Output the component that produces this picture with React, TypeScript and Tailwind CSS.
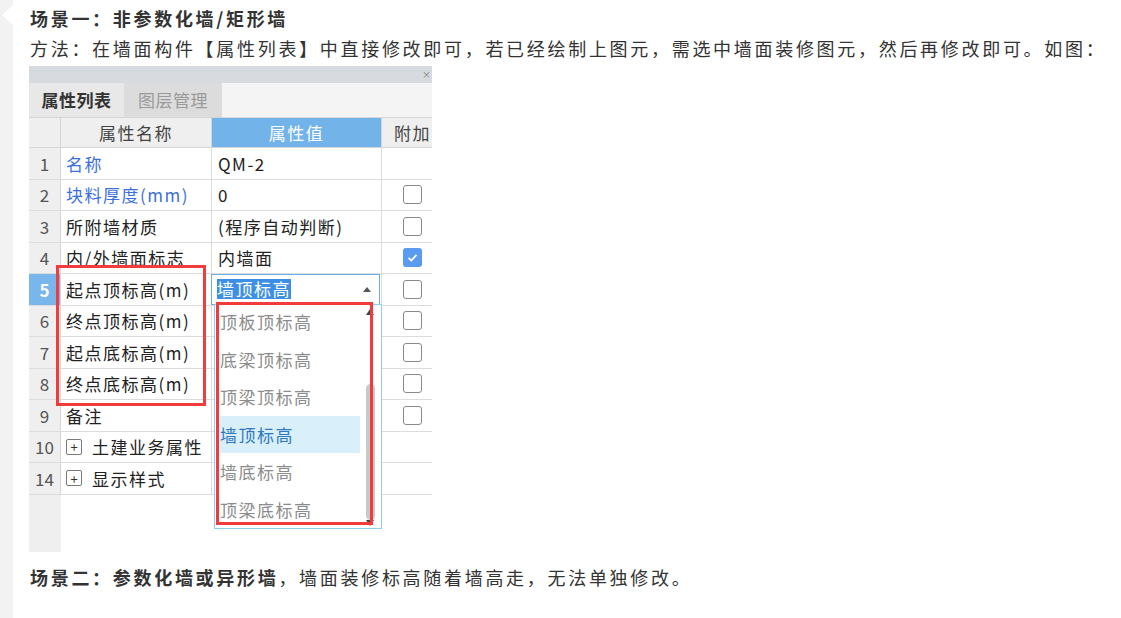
const FONT = { fontFamily: "'Noto Sans CJK SC', 'Noto Sans', sans-serif" };

type Row = {
  n: string;
  name: string;
  blue?: boolean;
  value?: string;
  cb?: boolean | null;
  combo?: boolean;
  plus?: boolean;
};

const rows: Row[] = [
  { n: "1", name: "名称", blue: true, value: "QM-2", cb: null },
  { n: "2", name: "块料厚度(mm)", blue: true, value: "0", cb: false },
  { n: "3", name: "所附墙材质", value: "(程序自动判断)", cb: false },
  { n: "4", name: "内/外墙面标志", value: "内墙面", cb: true },
  { n: "5", name: "起点顶标高(m)", combo: true, cb: false },
  { n: "6", name: "终点顶标高(m)", cb: false },
  { n: "7", name: "起点底标高(m)", cb: false },
  { n: "8", name: "终点底标高(m)", cb: false },
  { n: "9", name: "备注", cb: false },
  { n: "10", name: "土建业务属性", plus: true, cb: null },
  { n: "14", name: "显示样式", plus: true, cb: null },
];

const options = ["顶板顶标高", "底梁顶标高", "顶梁顶标高", "墙顶标高", "墙底标高", "顶梁底标高"];

function Checkbox({ checked }: { checked: boolean }) {
  if (checked) {
    return (
      <div className="w-[19px] h-[19px] rounded-[3px] bg-[#5b9bef] flex items-center justify-center">
        <svg width="13" height="13" viewBox="0 0 13 13">
          <path d="M2.5 6.8 L5.3 9.5 L10.5 3.8" fill="none" stroke="#fff" strokeWidth="1.8" />
        </svg>
      </div>
    );
  }
  return <div className="w-[19px] h-[19px] rounded-[3px] border border-[#8a8a8a] bg-white" />;
}

function PropertyTable() {
  return (
    <div className="relative w-[403px] h-[486px] -ml-px bg-white overflow-hidden">
      <div className="h-[17px] bg-[#d7dade] flex justify-end items-center pr-[1px] text-[9px] text-[#777] leading-none">×</div>
      <div className="h-[34px] bg-[#f4f4f4] flex text-[17px] tracking-[0.5px]">
        <div className="w-[95px] bg-[#e8e8e8] flex items-center justify-center font-bold text-[#333]">属性列表</div>
        <div className="w-[98px] bg-[#dcdcdc] flex items-center justify-center text-[#9a9a9a]">图层管理</div>
      </div>

      <div className="flex h-[31px] border-t border-b border-[#d6d6d6] text-[17px] tracking-[1.5px]">
        <div className="w-[32px] bg-[#efefef] border-r border-[#d6d6d6]" />
        <div className="w-[151px] bg-[#efefef] border-r border-[#d6d6d6] flex items-center justify-center text-[#444]">属性名称</div>
        <div className="w-[170px] bg-[#72b3e9] border-r border-[#d6d6d6] flex items-center justify-center text-white">属性值</div>
        <div className="flex-1 bg-[#efefef] flex items-center pl-[12px] text-[#444]">附加</div>
      </div>

      {rows.map((r) => (
        <div key={r.n} className="flex h-[31.5px] border-b border-[#dcdcdc] text-[17px] tracking-[1.5px]">
          <div
            className={
              r.combo
                ? "w-[32px] bg-[#79b6ec] border-r border-[#d6d6d6] flex items-center justify-center text-white font-bold tracking-normal"
                : "w-[32px] bg-[#efefef] border-r border-[#d6d6d6] flex items-center justify-center text-[#555] tracking-normal"
            }
          >
            {r.n}
          </div>
          <div
            className={
              r.blue
                ? "w-[151px] border-r border-[#dcdcdc] flex items-center pl-[5px] text-[#3c6fdc] whitespace-nowrap"
                : "w-[151px] border-r border-[#dcdcdc] flex items-center pl-[5px] text-[#222] whitespace-nowrap"
            }
          >
            {r.plus && (
              <span className="w-[16px] h-[16px] mr-[10px] rounded-[2px] border border-[#7a7a7a] flex items-center justify-center text-[13px] leading-none tracking-normal text-[#333]">
                +
              </span>
            )}
            {r.name}
          </div>
          <div className="w-[170px] border-r border-[#dcdcdc] flex items-center text-[#222] whitespace-nowrap">
            {r.combo ? (
              <div className="w-[169px] h-[31px] -ml-px border border-[#6aaee6] flex items-center pl-[5px] pr-[8px] bg-white">
                <span className="bg-[#3d8fe6] text-white leading-[20px]">墙顶标高</span>
                <svg className="ml-auto" width="8" height="5" viewBox="0 0 8 5">
                  <path d="M0 5 L4 0 L8 5 Z" fill="#555" />
                </svg>
              </div>
            ) : (
              <span className="pl-[6px]">{r.value}</span>
            )}
          </div>
          <div className="flex-1 flex items-center pl-[21px]">
            {r.cb !== null && r.cb !== undefined && <Checkbox checked={r.cb} />}
          </div>
        </div>
      ))}

      <div className="flex h-[60px]">
        <div className="w-[32px] bg-[#efefef]" />
      </div>

      <div className="absolute left-[185px] top-[238px] w-[168px] h-[225px] border border-[#8ccfee] bg-white text-[17px] tracking-[1.5px] overflow-hidden">
        <div className="-mt-[2px]">
          {options.map((o, i) => (
            <div
              key={o}
              className={
                i === 3
                  ? "h-[37.5px] ml-[5px] w-[140px] flex items-center bg-[#d9f0fb] text-[#2f78c0]"
                  : "h-[37.5px] ml-[5px] w-[140px] flex items-center text-[#8c8c8c]"
              }
            >
              {o}
            </div>
          ))}
        </div>
        <div className="absolute right-[6px] top-[2px] bottom-[2px] w-[10px] flex flex-col items-center">
          <svg width="8" height="6" viewBox="0 0 8 6" className="mt-[2px]">
            <path d="M0 6 L4 0 L8 6 Z" fill="#444" />
          </svg>
          <div className="mt-[69px] w-[9px] flex-1 rounded-full bg-[#c9c9c9]" />
          <svg width="8" height="6" viewBox="0 0 8 6">
            <path d="M0 0 L4 6 L8 0 Z" fill="#444" />
          </svg>
        </div>
      </div>

      <div className="absolute left-[27px] top-[199px] w-[150px] h-[141px] border-[3px] border-[#f23b3d]" />
      <div className="absolute left-[187px] top-[236px] w-[157px] h-[223px] border-[3px] border-[#f23b3d]" />
    </div>
  );
}

export default function App() {
  return (
    <div className="w-full h-[618px] flex bg-white text-[#333]" style={FONT}>
      <div className="relative w-[13px] shrink-0 bg-[#f2f2f2]">
        <svg className="absolute left-0 top-0" width="13" height="30" viewBox="0 0 13 30">
          <path d="M13 5 L2 15 L13 25 Z" fill="#fff" />
        </svg>
      </div>
      <div className="flex-1 pl-[17px] pt-[3px]">
        <div className="text-[18px] leading-[30px] tracking-[2.7px] font-bold text-[#333] whitespace-nowrap">
          场景一：非参数化墙/矩形墙
        </div>
        <div className="text-[18px] leading-[30px] tracking-[2.7px] text-[#333] whitespace-nowrap">
          方法：在墙面构件【属性列表】中直接修改即可，若已经绘制上图元，需选中墙面装修图元，然后再修改即可。如图：
        </div>
        <div className="mt-[3px]">
          <PropertyTable />
        </div>
        <div className="mt-[10px] text-[18px] leading-[30px] tracking-[2.7px] text-[#333] whitespace-nowrap">
          <span className="font-bold">场景二：参数化墙或异形墙</span>
          ，墙面装修标高随着墙高走，无法单独修改。
        </div>
      </div>
    </div>
  );
}
